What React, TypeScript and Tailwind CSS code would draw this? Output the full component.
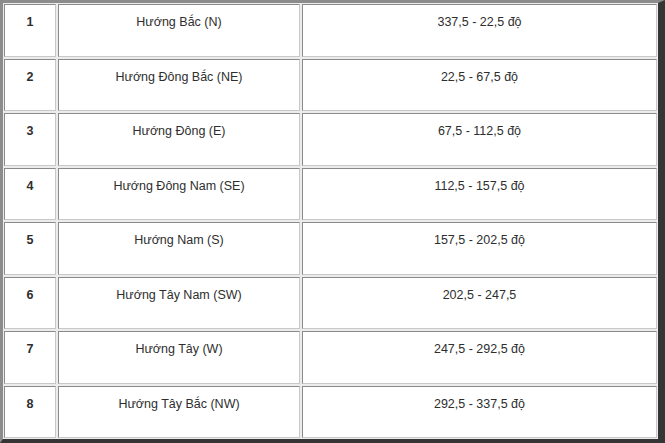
const rows = [
  ["1", "Hướng Bắc (N)", "337,5 - 22,5 độ"],
  ["2", "Hướng Đông Bắc (NE)", "22,5 - 67,5 độ"],
  ["3", "Hướng Đông (E)", "67,5 - 112,5 độ"],
  ["4", "Hướng Đông Nam (SE)", "112,5 - 157,5 độ"],
  ["5", "Hướng Nam (S)", "157,5 - 202,5 độ"],
  ["6", "Hướng Tây Nam (SW)", "202,5 - 247,5"],
  ["7", "Hướng Tây (W)", "247,5 - 292,5 độ"],
  ["8", "Hướng Tây Bắc (NW)", "292,5 - 337,5 độ"],
];

const cell =
  "flex justify-center pt-[10px] bg-white border border-t-[#8a8a8a] border-l-[#8a8a8a] border-b-[#c8c8c8] border-r-[#c8c8c8]";

const App = () => {
  return (
    <div className="w-[665px] h-[443px] bg-white font-['Liberation_Sans',Arial,sans-serif] text-[12.5px] leading-[15px] text-[#2e2e2e]">
      <div className="grid h-full grid-cols-[52px_242px_1fr] grid-rows-8 gap-[2px] border-l-[3px] border-t-[3px] border-r-[7px] border-b-[4px] border-l-[#8c8c8c] border-t-[#8c8c8c] border-r-[#353535] border-b-[#353535] bg-[#ececec] p-[1px]">
        {rows.map(([n, name, deg]) => (
          <div key={n} className="contents">
            <div className={`${cell} font-bold`}>{n}</div>
            <div className={cell}>{name}</div>
            <div className={cell}>{deg}</div>
          </div>
        ))}
      </div>
    </div>
  );
};

export default App;
